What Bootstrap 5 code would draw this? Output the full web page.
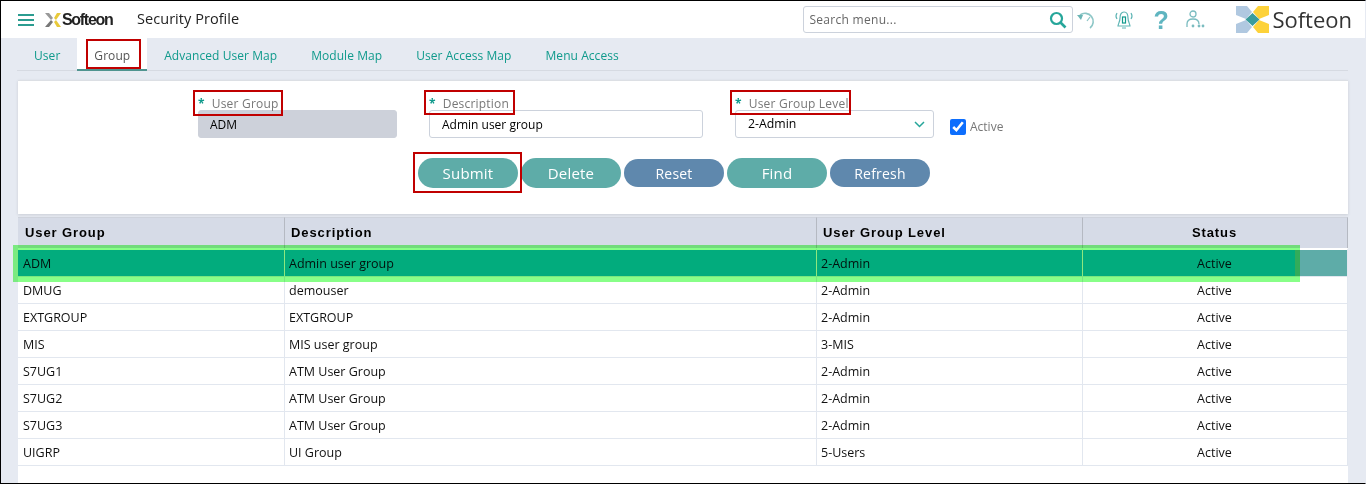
<!DOCTYPE html>
<html lang="en">
<head>
  <meta charset="UTF-8">
  <title>Security Profile</title>
  <link href="https://cdn.jsdelivr.net/npm/bootstrap@5.3.0/dist/css/bootstrap.min.css" rel="stylesheet">
  <style>
    html, body { height: 100%; }
    body { font-family: "Open Sans", "Liberation Sans", sans-serif; font-size: 13px; background: #e6eaf2; color: #000; overflow: hidden; }
    .frame { position: relative; height: 484px; border: 1px solid #000; border-right-color: #e6eaf2; background: #e6eaf2; overflow: hidden; }
    .topbar { height: 37px; background: #fff; padding-left: 17px; }
    .menu-bars { width: 16px; height: 12px; border-top: 2px solid #2b9c90; border-bottom: 2px solid #2b9c90; position: relative; margin-right: 11px; }
    .menu-bars::after { content: ""; position: absolute; left: 0; right: 0; top: 3px; height: 2px; background: #2b9c90; }
    .small-logo { font-family: "Liberation Sans", sans-serif; font-weight: 700; font-size: 16px; letter-spacing: -1.3px; color: #222; width: 75px; }
    .page-title { font-family: "Open Sans", sans-serif; font-size: 14.5px; letter-spacing: .05px; color: #222; padding-bottom: 1px; }
    .search-box { width: 270px; height: 27px; border: 1px solid #ccd2dc; border-radius: 3px; padding: 0 5px; color: #666; font-size: 12px; letter-spacing: .3px; }
    .tool-q { color: #5fb5c0; font-size: 25px; line-height: 24px; font-family: "Liberation Sans", sans-serif; font-weight: 700; width: 14px; text-align: center; }
    .big-logo { font-family: "Open Sans", sans-serif; font-size: 22px; color: #333; }
    .tab-row { height: 33px; margin: 0 17px 0 16px; padding-left: 0; list-style: none; border-bottom: 1px solid #d6dae2; }
    .tab-row a { display: block; padding: 9px 17px 0; height: 33px; color: #109a8c; text-decoration: none; font-size: 12px; letter-spacing: .06px; }
    .tab-row a.on { background: #fff; color: #555; border-bottom: 2px solid #4f9490; }
    .form-panel { margin: 9px 17px 0; height: 134px; background: #fff; border-top: 1px solid #dcdfe4; padding-left: 180px; box-shadow: 0 1px 3px rgba(0,0,0,.12); }
    .fld-label { height: 15px; line-height: 17px; font-size: 12px; color: #777; letter-spacing: .2px; margin: 14px 0 0; }
    .fld-label b { color: #109a8c; font-weight: 700; margin-right: 7px; }
    .fld-in { height: 28px; line-height: 28px; border: 1px solid #ccd2dc; border-radius: 3px; padding: 0 12px; font-size: 12px; }
    .fld-in.locked { background: #cdd1da; border-color: #cdd1da; padding-left: 11px; }
    .fld-in.pick { padding-right: 8px; font-size: 12.3px; }
    .act-check { accent-color: #0d6efd; width: 16px; height: 16px; margin: 0 4px 0 0; }
    .act-wrap { color: #777; font-size: 12px; margin: 37px 0 0 16px; height: 17px; }
    .pill { border: 0; width: 100px; color: #fff; border-radius: 15px; font-size: 15px; letter-spacing: .2px; font-weight: 500; padding: 0; }
    .pill-a { height: 30px; background: #5eaca8; }
    .pill-b { height: 28px; background: #5f88ad; font-size: 14px; }
    .btn-line { margin: 20px 0 0 220px; gap: 3px; }
    .grid-wrap { margin: 3px 17px 0; height: 270px; background: #fff; }
    .sec-table { table-layout: fixed; width: 1330px; border-collapse: separate; border-spacing: 0; margin: 0; }
    .sec-table th { height: 31px; padding: 0 7px; background: #d6dbe7; font-family: "Liberation Sans", sans-serif; font-size: 13px; letter-spacing: .9px; border-right: 1px solid #b5b9c2; border-top: 1px solid #cfd3dc; border-bottom: 0; }
    .sec-table td { height: 27px; padding: 2px 5px 0; background: #fff; font-size: 12.5px; border-right: 1px solid #e2e7ef; border-bottom: 1px solid #e2e7ef; color: #111; }
    .sec-table th:nth-child(n+2) { padding-left: 6px; }
    .sec-table td:nth-child(n+2) { padding-left: 4px; }
    .sec-table tr.picked td { background: #5eaca8; border-top: 2px solid #fff; height: 29px; }
    .mark-red { position: absolute; border: 2px solid #c00000; pointer-events: none; }
    .mark-green { position: absolute; left: 12px; top: 244px; width: 1287px; height: 37px; border: 5px solid #88ff88; border-bottom-width: 6px; background: #05ffbe; mix-blend-mode: multiply; }
    .mark-tick { position: absolute; top: 249px; width: 1px; height: 26px; background: #8ee87e; }
  </style>
</head>
<body>
  <div class="frame">
    <!-- Top bar -->
    <div class="topbar d-flex align-items-center">
      <span class="menu-bars"></span>
      <svg width="17" height="14" viewBox="0 0 17 14">
        <path d="M0 0h4l4 5-2 2z" fill="#999"/><path d="M0 14h4l4-5-2-2z" fill="#777"/>
        <path d="M16 0h-4L9 5l2 2z" fill="#e8c93a"/><path d="M16 14h-4L9 9l2-2z" fill="#e8c93a"/>
      </svg>
      <span class="small-logo">Softeon</span>
      <span class="page-title">Security Profile</span>
      <div class="ms-auto d-flex align-items-center" style="margin-right:13px">
        <div class="search-box d-flex align-items-center justify-content-between me-1">
          <span>Search menu...</span>
          <svg width="18" height="18" viewBox="0 0 18 18"><circle cx="7.500" cy="7.500" r="5.500" fill="none" stroke="#26a69a" stroke-width="2.200"/><path d="M11.500 11.500l5 5" stroke="#26a69a" stroke-width="2.600"/></svg>
        </div>
        <svg width="20" height="20" viewBox="0 0 20 20" fill="none" style="margin-right:17px"><path d="M3 5A8 8 0 1 1 13 18" stroke="#8cc6c6" stroke-width="1.600"/><path d="M0 5l6 0-2 5z" fill="#6bb5b5"/><path d="M13 7l-3 4" stroke="#8cc6c6" stroke-width="1.200"/></svg>
        <svg width="20" height="20" viewBox="0 0 20 20" fill="none" stroke="#5fb5b5" stroke-width="1.200" style="margin-right:19px"><path d="M10 2c-3 0-4 3-4 6 0 4-2 6-2 8h12c0-2-2-4-2-8 0-3-1-6-4-6zM8 18h4"/><rect x="8.500" y="7" width="3" height="6" stroke="#109a8c"/><path d="M3 3Q1 6 3 9M17 3q2 3 0 6"/></svg>
        <span class="tool-q" style="margin-right:19px">?</span>
        <svg width="20" height="20" viewBox="0 0 20 20" fill="none" style="margin-right:30px"><circle cx="7" cy="4" r="3" stroke="#7bbcc0" stroke-width="1.300"/><path d="M1 17v-3c0-3 2-5 6-5s6 2 6 5" stroke="#7bbcc0" stroke-width="1.300"/><circle cx="7" cy="16" r="1.400" fill="#7bbcc0"/><circle cx="13" cy="16" r="1.400" fill="#7bbcc0"/><circle cx="17" cy="16" r="1.400" fill="#7bbcc0"/></svg>
        <svg width="33" height="27" viewBox="0 0 33 27">
          <path d="M0 0h11l5 6-6 7-10-4z" fill="#b0c8e0"/><path d="M0 27h11l5-6-6-7-10 4z" fill="#b0c8e0"/>
          <path d="M33 0h-11l-5 6 6 7 10-4z" fill="#fdd23a"/><path d="M33 27h-11l-5-6 6-7 10 4z" fill="#fdd23a"/>
          <path d="M16.500 7l7 6.500-7 6.500-7-6.500z" fill="#3a9c9c"/>
        </svg>
        <span class="big-logo" style="margin-left:3px">Softeon</span>
      </div>
    </div>

    <!-- Tabs -->
    <ul class="tab-row d-flex">
      <li><a href="#">User</a></li>
      <li><a class="on" href="#">Group</a></li>
      <li><a href="#">Advanced User Map</a></li>
      <li><a href="#">Module Map</a></li>
      <li><a href="#">User Access Map</a></li>
      <li><a href="#">Menu Access</a></li>
    </ul>

    <!-- Form -->
    <div class="form-panel">
      <div class="d-flex">
        <div style="width:199px"><div class="fld-label"><b>*</b>User Group</div><div class="fld-in locked">ADM</div></div>
        <div style="width:274px;margin-left:32px"><div class="fld-label"><b>*</b>Description</div><div class="fld-in">Admin user group</div></div>
        <div style="width:199px;margin-left:32px"><div class="fld-label"><b>*</b>User Group Level</div>
          <div class="fld-in pick d-flex justify-content-between align-items-center">2-Admin
            <svg width="11" height="7" viewBox="0 0 11 7" fill="none"><path d="M1 1l4.500 4.500L10 1" stroke="#26a69a" stroke-width="1.500"/></svg>
          </div>
        </div>
        <label class="act-wrap d-flex align-items-center"><input class="act-check" type="checkbox" checked>Active</label>
      </div>
      <div class="btn-line d-flex align-items-center">
        <button class="pill pill-a">Submit</button>
        <button class="pill pill-a">Delete</button>
        <button class="pill pill-b">Reset</button>
        <button class="pill pill-a">Find</button>
        <button class="pill pill-b">Refresh</button>
      </div>
    </div>

    <!-- Grid -->
    <div class="grid-wrap">
      <table class="sec-table">
        <colgroup><col style="width:267px"><col style="width:532px"><col style="width:266px"><col style="width:265px"></colgroup>
        <thead><tr><th>User Group</th><th>Description</th><th>User Group Level</th><th class="text-center">Status</th></tr></thead>
        <tbody>
          <tr class="picked"><td>ADM</td><td>Admin user group</td><td>2-Admin</td><td class="text-center">Active</td></tr>
          <tr><td>DMUG</td><td>demouser</td><td>2-Admin</td><td class="text-center">Active</td></tr>
          <tr><td>EXTGROUP</td><td>EXTGROUP</td><td>2-Admin</td><td class="text-center">Active</td></tr>
          <tr><td>MIS</td><td>MIS user group</td><td>3-MIS</td><td class="text-center">Active</td></tr>
          <tr><td>S7UG1</td><td>ATM User Group</td><td>2-Admin</td><td class="text-center">Active</td></tr>
          <tr><td>S7UG2</td><td>ATM User Group</td><td>2-Admin</td><td class="text-center">Active</td></tr>
          <tr><td>S7UG3</td><td>ATM User Group</td><td>2-Admin</td><td class="text-center">Active</td></tr>
          <tr><td>UIGRP</td><td>UI Group</td><td>5-Users</td><td class="text-center">Active</td></tr>
        </tbody>
      </table>
    </div>

    <!-- Annotations drawn over the screenshot -->
    <div class="mark-green"></div>
    <div class="mark-tick" style="left:283px"></div>
    <div class="mark-tick" style="left:815px"></div>
    <div class="mark-tick" style="left:1081px"></div>
    <div class="mark-red" style="left:85px;top:38px;width:55px;height:30px"></div>
    <div class="mark-red" style="left:192px;top:89px;width:90px;height:26px"></div>
    <div class="mark-red" style="left:423px;top:89px;width:91px;height:25px"></div>
    <div class="mark-red" style="left:729px;top:89px;width:121px;height:25px"></div>
    <div class="mark-red" style="left:412px;top:151px;width:109px;height:41px"></div>
  </div>
  <script src="https://cdn.jsdelivr.net/npm/bootstrap@5.3.0/dist/js/bootstrap.bundle.min.js"></script>
</body>
</html>
